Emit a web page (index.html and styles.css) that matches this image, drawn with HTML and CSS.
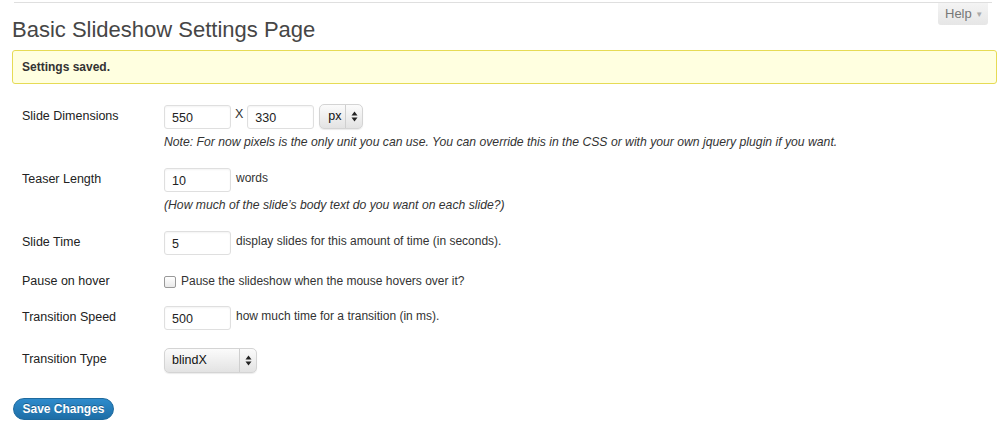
FILE: index.html
```html
<!DOCTYPE html>
<html>
<head>
<meta charset="utf-8">
<link rel="stylesheet" href="styles.css">
</head>
<body>
<div class="wrap">
  <div class="topline"></div>
  <div class="help-tab">Help <span class="help-arrow">▼</span></div>
  <h1 class="title">Basic Slideshow Settings Page</h1>
  <div class="notice">Settings saved.</div>
  <form class="form">
    <div class="row row-dim">
      <div class="label">Slide Dimensions</div>
      <div class="field">
        <div class="line">
          <span class="input">550</span>
          <span class="x">X</span>
          <span class="input">330</span>
          <span class="select sel-px"><span class="sel-text">px</span><span class="sel-arrows"><svg width="7" height="11" viewBox="0 0 7 11"><path d="M3.5 0.5L6.5 4.5H0.5Z M3.5 10.5L6.5 6.5H0.5Z" fill="#222"/></svg></span></span>
        </div>
        <div class="desc">Note: For now pixels is the only unit you can use. You can override this in the CSS or with your own jquery plugin if you want.</div>
      </div>
    </div>
    <div class="row row-teaser">
      <div class="label">Teaser Length</div>
      <div class="field">
        <div class="line">
          <span class="input">10</span>
          <span class="after">words</span>
        </div>
        <div class="desc">(How much of the slide’s body text do you want on each slide?)</div>
      </div>
    </div>
    <div class="row row-time">
      <div class="label">Slide Time</div>
      <div class="field">
        <div class="line">
          <span class="input">5</span>
          <span class="after">display slides for this amount of time (in seconds).</span>
        </div>
      </div>
    </div>
    <div class="row row-pause">
      <div class="label label-small">Pause on hover</div>
      <div class="field">
        <div class="check-line">
          <span class="checkbox"></span>
          <span class="check-text">Pause the slideshow when the mouse hovers over it?</span>
        </div>
      </div>
    </div>
    <div class="row row-speed">
      <div class="label">Transition Speed</div>
      <div class="field">
        <div class="line">
          <span class="input">500</span>
          <span class="after">how much time for a transition (in ms).</span>
        </div>
      </div>
    </div>
    <div class="row row-type">
      <div class="label">Transition Type</div>
      <div class="field">
        <div class="line">
          <span class="select sel-type"><span class="sel-text">blindX</span><span class="sel-arrows"><svg width="7" height="11" viewBox="0 0 7 11"><path d="M3.5 0.5L6.5 4.5H0.5Z M3.5 10.5L6.5 6.5H0.5Z" fill="#222"/></svg></span></span>
        </div>
      </div>
    </div>
    <div class="submit">
      <span class="button">Save Changes</span>
    </div>
  </form>
</div>
</body>
</html>
```
FILE: styles.css
```css
* { box-sizing: border-box; }
html, body { margin: 0; padding: 0; background: #fff; }
body {
  font-family: "Liberation Sans", Arial, sans-serif;
  font-size: 12px;
  color: #333;
}
.wrap {
  position: relative;
  padding: 2px 6px 0 12px;
}
.topline {
  height: 1px;
  background: #dfdfdf;
  margin-left: 2px;
  margin-right: 5px;
}
.help-tab {
  position: absolute;
  top: 3px;
  right: 15px;
  width: 50px;
  height: 22px;
  background: linear-gradient(#f4f4f4, #e6e6e6);
  border-radius: 0 0 3px 3px;
  font-size: 13px;
  color: #777;
  line-height: 22px;
  padding-left: 7px;
}
.help-arrow {
  font-size: 8px;
  color: #aaa;
  vertical-align: 1px;
}
.title {
  margin: 0;
  padding-top: 12px;
  font-weight: normal;
  font-size: 22px;
  line-height: 29px;
  color: #464646;
  height: 47px;
}
.notice {
  background: #ffffe0;
  border: 1px solid #e6db55;
  border-radius: 3px;
  height: 34px;
  padding-left: 9px;
  line-height: 32px;
  font-size: 12px;
  font-weight: bold;
  color: #333;
}
.form {
  padding-left: 10px;
  padding-top: 21px;
}
.row {
  display: grid;
  grid-template-columns: 142px 1fr;
}
.label {
  line-height: 22px;
  font-size: 12.5px;
  color: #222;
}
.line {
  display: flex;
  align-items: flex-start;
  height: 25px;
}
.input {
  display: inline-block;
  width: 67px;
  height: 24px;
  border: 1px solid #dfdfdf;
  border-radius: 3px;
  background: #fff;
  box-shadow: inset 0 1px 2px rgba(0,0,0,0.05);
  padding: 5px 0 0 7px;
  font-size: 12.5px;
  line-height: 14px;
  color: #222;
}
.x {
  margin: 0 4px 0 4px;
  line-height: 18px;
  font-size: 12.5px;
  color: #333;
}
.after {
  margin-left: 5px;
  line-height: 20px;
  font-size: 12px;
  color: #333;
}
.select {
  display: inline-flex;
  height: 25px;
  border-radius: 5px;
  background: linear-gradient(#fbfbfb, #e3e3e3);
  border: 1px solid #d4d4d4;
  box-shadow: 0 1px 1px rgba(0,0,0,0.08);
  align-items: stretch;
}
.sel-px { margin-left: 5px; width: 44px; margin-top: -1px; }
.sel-type { width: 93px; }
.sel-text {
  flex: 1;
  padding-left: 7px;
  line-height: 22px;
  font-size: 12.5px;
  color: #111;
}
.sel-px .sel-text { padding-left: 8px; }
.sel-arrows {
  width: 17px;
  border-left: 1px solid #cfcfcf;
  display: flex;
  align-items: center;
  justify-content: center;
}
.desc {
  font-style: italic;
  font-size: 12.2px;
  line-height: 15px;
  margin-top: 5px;
  color: #333;
}
.row-dim { height: 63px; }
.row-teaser { height: 63px; }
.row-time { height: 44px; }
.row-pause { height: 31px; }
.row-speed { height: 42px; }
.row-type { height: 50px; }
.row-pause .label { line-height: 13px; }
.check-line {
  display: flex;
  align-items: center;
  height: 13px;
}
.checkbox {
  width: 12px;
  height: 12px;
  border: 1px solid #999;
  border-radius: 2px;
  background: linear-gradient(#fff, #e9e9e9);
  margin-right: 5px;
}
.check-text { line-height: 13px; font-size: 12px; color: #333; }
.submit {
  margin-left: -9px;
}
.button {
  display: inline-block;
  width: 101px;
  height: 22px;
  border-radius: 11px;
  background: linear-gradient(#2e8bcc, #1e6ea6);
  border: 1px solid #1e6a9e;
  color: #fff;
  font-weight: bold;
  font-size: 12px;
  line-height: 20px;
  text-align: center;
  text-shadow: 0 -1px 0 rgba(0,0,0,0.3);
}
```
